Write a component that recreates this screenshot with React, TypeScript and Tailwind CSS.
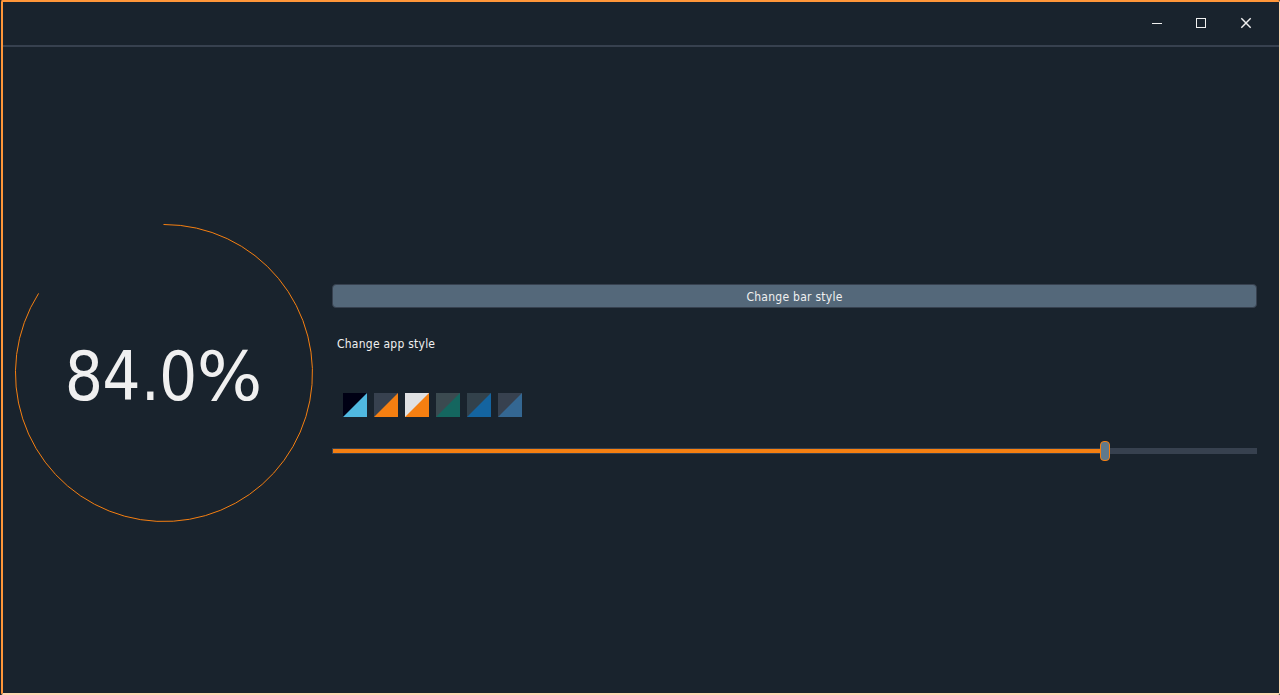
const swatches: [string, string, string][] = [
  ['Night', '#000014', '#50b8e0'],
  ['Dark orange', '#37414f', '#f57f11'],
  ['Light orange', '#e0e1e3', '#f57f11'],
  ['Green', '#3b4a50', '#14665f'],
  ['Blue', '#32414b', '#1464a0'],
  ['Slate', '#37414f', '#346792'],
];

function TitleBar() {
  return (
    <header className="flex h-[45px] shrink-0 items-start justify-end border-b-2 border-[#37414f] pt-[15px] pr-[27px]">
      <div className="flex gap-[33px]">
        <svg width="12" height="12" shapeRendering="crispEdges" aria-label="Minimize">
          <path d="M2 6h10v1H2z" fill="#f0f0f0" />
        </svg>
        <svg width="12" height="12" shapeRendering="crispEdges" aria-label="Maximize">
          <path d="M1.5 1.5h9v9h-9z" fill="none" stroke="#f0f0f0" />
        </svg>
        <svg width="12" height="12" aria-label="Close">
          <path d="M1.3 1.3l9.4 9.4M10.7 1.3l-9.4 9.4" stroke="#f0f0f0" strokeWidth="1.45" />
        </svg>
      </div>
    </header>
  );
}

function Gauge() {
  return (
    <svg width="300" height="300" viewBox="0 0 300 300" className="shrink-0">
      <path d="M149.5 1.5H150A148.5 148.5 0 1 1 24.6 70.4" fill="none" stroke="#f57f11" strokeWidth="1" />
      <g
        fill="#f0f0f0"
        className="font-['DejaVu_Sans_Condensed','DejaVu_Sans',sans-serif] text-[67px] [font-stretch:75%]"
      >
        <text y="177" x="50.7 88.3 126.7 145">
          84.0
        </text>
        <text transform="translate(182.7 177) scale(1.145 1)">%</text>
      </g>
    </svg>
  );
}

function Controls() {
  return (
    <section className="flex w-[925px] flex-col pt-[237px]">
      <button className="h-6 rounded-[4px] border border-[#37414f] bg-[#54687a] pt-px text-center text-[12px] leading-5 tracking-[0.26px] text-[#f0f0f0]">
        Change bar style
      </button>
      <div className="mt-[26px] ml-[5px] h-5 text-[12px] leading-5 tracking-[0.24px] text-[#f0f0f0]">
        Change app style
      </div>
      <div className="mt-[39px] ml-[11px] flex gap-[7px]">
        {swatches.map(([name, base, accent]) => (
          <svg key={name} width="24" height="24" aria-label={name}>
            <path d="M0 0h24v24H0z" fill={base} />
            <path d="M24 0v24H0z" fill={accent} />
          </svg>
        ))}
      </div>
      <div className="mt-6 flex h-5 items-center">
        <div className="h-[6px] w-[768px] border border-r-0 border-[#37414f] bg-[#f57f11]" />
        <div className="h-5 w-[10px] rounded-[4px] border border-[#f57f11] bg-[#60798b]" />
        <div className="h-[6px] flex-1 bg-[#37414f]" />
      </div>
    </section>
  );
}

export default function App() {
  return (
    <div className="h-[695px] w-[1280px] bg-[#19232d] pl-px font-['DejaVu_Sans_Condensed','DejaVu_Sans',sans-serif] [font-stretch:75%]">
      <div className="flex h-full flex-col rounded-[2px] border-2 border-r border-t-[#ff9639] border-r-[#ffd7b1] border-b-[#ffd7b1] border-l-[#ff9639]">
        <TitleBar />
        <main className="flex min-h-0 flex-1 pl-[11px]">
          <div className="pt-[176px]">
            <Gauge />
          </div>
          <div className="ml-[18px]">
            <Controls />
          </div>
        </main>
      </div>
    </div>
  );
}
